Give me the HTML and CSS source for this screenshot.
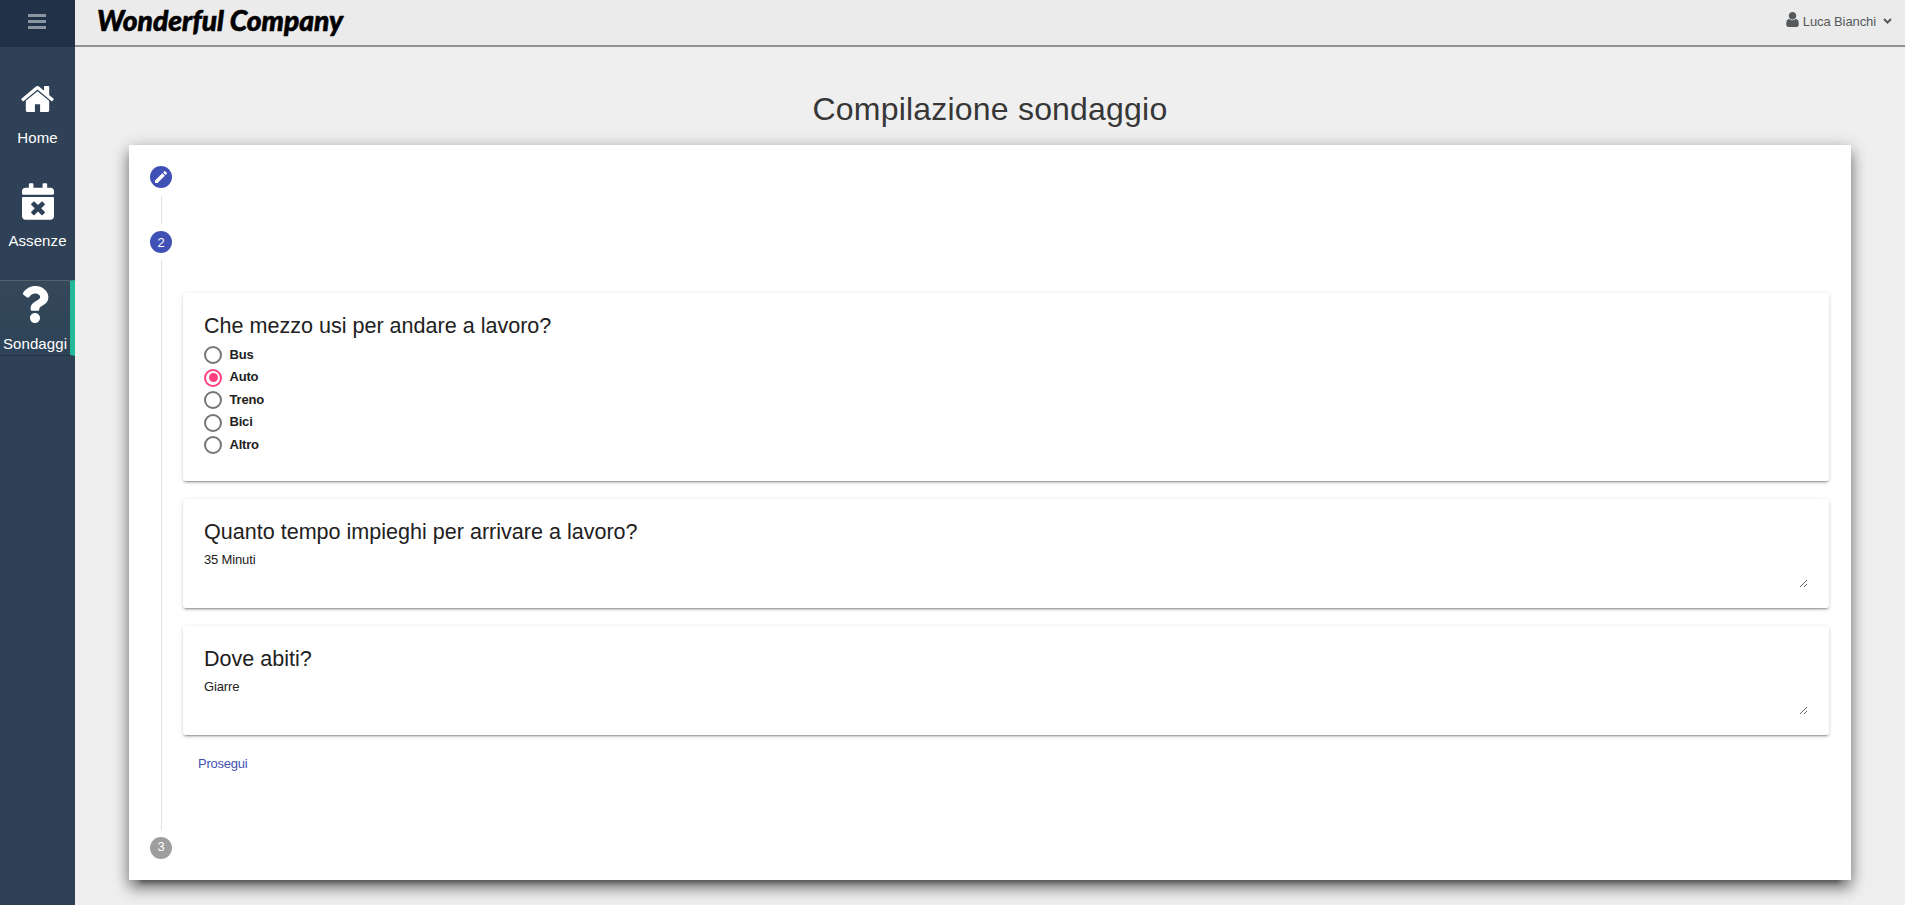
FILE: index.html
```html
<!DOCTYPE html>
<html lang="it">
<head>
<meta charset="utf-8">
<title>Compilazione sondaggio</title>
<link rel="stylesheet" href="styles.css">
</head>
<body>
<div class="app">
  <aside class="sidebar">
    <div class="menu-toggle"><svg width="18" height="15" viewBox="0 0 18 15"><path d="M0 0h18v3H0zM0 6h18v3H0zM0 12h18v3H0z"/></svg></div>
    <nav class="nav">
      <a class="nav-item">
        <span class="nav-icon"><svg class="icon-home" viewBox="88 253 1616 1283"><path d="M1472 992v480q0 26-19 45t-45 19h-384v-384h-256v384h-384q-26 0-45-19t-19-45v-480q0-1 .5-3t.5-3l575-474 575 474q1 2 1 6zm223-69l-62 74q-8 9-21 11h-3q-13 0-21-7l-692-577-692 577q-12 8-24 7-13-2-21-11l-62-74q-8-10-7-23.5t11-21.5l719-599q32-26 76-26t76 26l244 204v-195q0-14 9-23t23-9h192q14 0 23 9t9 23v408l219 182q10 8 11 21.5t-7 23.5z"/></svg></span>
        <span class="nav-label">Home</span>
      </a>
      <a class="nav-item">
        <span class="nav-icon"><svg class="icon-calendar" viewBox="0 0 448 512"><path d="M436 160H12c-6.6 0-12-5.4-12-12v-36c0-26.500 21.500-48 48-48h48V12c0-6.600 5.400-12 12-12h40c6.600 0 12 5.400 12 12v52h128V12c0-6.600 5.400-12 12-12h40c6.600 0 12 5.400 12 12v52h48c26.500 0 48 21.500 48 48v36c0 6.600-5.400 12-12 12zM12 192h424c6.600 0 12 5.400 12 12v260c0 26.500-21.500 48-48 48H48c-26.500 0-48-21.500-48-48V204c0-6.600 5.400-12 12-12zm257.300 160l48.100-48.100c4.700-4.700 4.700-12.300 0-17l-28.300-28.300c-4.700-4.700-12.300-4.700-17 0L224 306.700l-48.100-48.100c-4.700-4.700-12.300-4.700-17 0l-28.300 28.300c-4.700 4.700-4.700 12.300 0 17l48.100 48.100-48.100 48.100c-4.700 4.700-4.700 12.300 0 17l28.300 28.300c4.700 4.700 12.300 4.700 17 0l48.100-48.100 48.100 48.100c4.700 4.700 12.300 4.700 17 0l28.300-28.300c4.700-4.700 4.700-12.300 0-17L269.300 352z"/></svg></span>
        <span class="nav-label">Assenze</span>
      </a>
      <a class="nav-item active">
        <span class="nav-icon"><svg class="icon-question" viewBox="0 0 384 512"><path d="M202.021 0C122.202 0 70.503 32.703 29.914 91.026c-7.363 10.580-5.093 25.086 5.178 32.874l43.138 32.709c10.373 7.865 25.132 6.026 33.253-4.148 25.049-31.381 43.630-49.449 82.757-49.449 30.764 0 68.816 19.799 68.816 49.631 0 22.552-18.617 34.134-48.993 51.164-35.423 19.860-82.299 44.576-82.299 106.405V320c0 13.255 10.745 24 24 24h72.471c13.255 0 24-10.745 24-24v-5.773c0-42.860 125.268-44.645 125.268-160.627C377.504 66.256 286.902 0 202.021 0zM192 373.459c-38.196 0-69.271 31.075-69.271 69.271 0 38.195 31.075 69.270 69.271 69.270s69.271-31.075 69.271-69.271-31.075-69.270-69.271-69.270z"/></svg></span>
        <span class="nav-label">Sondaggi</span>
      </a>
    </nav>
  </aside>
  <div class="page">
    <header class="topbar">
      <svg class="logo" width="262" height="45"><text x="5" y="31" textLength="246" lengthAdjust="spacingAndGlyphs">Wonderful Company</text></svg>
      <div class="user">
        <svg class="icon-user" viewBox="256 128 1280 1536"><path d="M1536 1399q0 109-62.500 187t-150.500 78h-854q-88 0-150.500-78t-62.500-187q0-85 8.500-160.500t31.500-152 58.500-131 94-89 134.500-34.500q131 128 313 128t313-128q76 0 134.500 34.500t94 89 58.500 131 31.500 152 8.500 160.500zm-256-887q0 159-112.500 271.500t-271.500 112.500-271.500-112.500-112.500-271.500 112.500-271.500 271.500-112.500 271.500 112.500 112.500 271.500z"/></svg>
        <span class="user-name">Luca Bianchi</span>
        <svg class="icon-chevron" viewBox="0 0 9 6"><path d="M1 1l3.500 3.500L8 1"/></svg>
      </div>
    </header>
    <main class="content">
      <h1 class="title">Compilazione sondaggio</h1>
      <section class="stepper">
        <div class="step-head"><span class="badge"><svg width="16" height="16" viewBox="0 0 24 24"><path d="M3 17.250V21h3.750L17.810 9.940l-3.750-3.750L3 17.250zM20.710 7.040c.39-.39.39-1.020 0-1.410l-2.340-2.340c-.39-.39-1.020-.39-1.410 0l-1.830 1.830 3.750 3.750 1.830-1.830z"/></svg></span></div>
        <div class="gap-line first"></div>
        <div class="step-head"><span class="badge">2</span></div>
        <div class="step-body">
          <article class="card choice">
            <h2>Che mezzo usi per andare a lavoro?</h2>
            <div class="options">
              <label class="option"><span class="radio"></span><span class="option-text">Bus</span></label>
              <label class="option"><span class="radio checked"></span><span class="option-text">Auto</span></label>
              <label class="option"><span class="radio"></span><span class="option-text">Treno</span></label>
              <label class="option"><span class="radio"></span><span class="option-text">Bici</span></label>
              <label class="option"><span class="radio"></span><span class="option-text">Altro</span></label>
            </div>
          </article>
          <article class="card open">
            <h2>Quanto tempo impieghi per arrivare a lavoro?</h2>
            <textarea>35 Minuti</textarea>
          </article>
          <article class="card open">
            <h2>Dove abiti?</h2>
            <textarea>Giarre</textarea>
          </article>
          <button class="next">Prosegui</button>
        </div>
        <div class="step-head"><span class="badge pending">3</span></div>
      </section>
    </main>
  </div>
</div>
</body>
</html>
```
FILE: styles.css
```css
* { box-sizing: border-box; }
html, body { height: 100%; }
body {
  margin: 0;
  overflow: hidden;
  background: #efefef;
  font-family: "Liberation Sans", Arial, sans-serif;
  font-size: 13px;
  color: #333;
}
svg { display: block; }
.app { display: flex; height: 100vh; }

.sidebar { width: 75px; flex: none; background: #2f4156; color: #fff; }
.menu-toggle { height: 47px; padding: 14px 0 0 28px; background: #203148; }
.menu-toggle svg { fill: #8b95a1; }
.nav { display: flex; flex-direction: column; gap: 27px; padding-top: 27px; }
.nav-item {
  display: flex;
  flex-direction: column;
  align-items: center;
  height: 76px;
  font-size: 15px;
  letter-spacing: .1px;
}
.nav-item svg { fill: #fff; }
.nav-icon { height: 54px; padding-top: 6px; }
.nav-label { line-height: 20px; }
.icon-home { width: 33px; height: 26px; margin-top: 6px; }
.icon-calendar { width: 32px; height: 37px; }
.icon-question { width: 28px; height: 37px; }
.nav-item.active {
  border-top: 1px solid #52636f;
  border-bottom: 1px solid #25333f;
  border-right: 5px solid #22b999;
  background: linear-gradient(#36485a, #2d4357);
}
.active .nav-icon { padding-top: 5px; height: 53px; }

.page { flex: 1; min-width: 0; }
.topbar {
  display: flex;
  justify-content: space-between;
  height: 47px;
  padding: 0 13px 0 17px;
  background: #ebebeb;
  border-bottom: 2px solid #929292;
}
.logo text {
  font: italic 900 28px Lato, "Liberation Sans", sans-serif;
  fill: #000;
  stroke: #000;
  stroke-width: .6px;
}
.user { display: flex; height: 43px; color: #55595c; }
.icon-user { width: 13px; height: 15px; margin: 12px 4px 0 0; fill: #55595c; }
.user-name { line-height: 43px; letter-spacing: -.1px; }
.icon-chevron { width: 9px; height: 6px; margin: 18px 0 0 7px; fill: none; stroke: #55595c; stroke-width: 2; }

.content { padding: 0 54px; }
.title {
  margin: 0;
  padding-top: 43px;
  height: 98px;
  font-size: 32px;
  line-height: 38px;
  font-weight: 400;
  letter-spacing: .2px;
  text-align: center;
  color: #373737;
}
.stepper {
  height: 735px;
  background: #fff;
  box-shadow: 0 14px 4px -11px rgba(0, 0, 0, .3), 0 8px 14px rgba(0, 0, 0, .5), 0 0 16px rgba(0, 0, 0, .12);
}
.step-head { height: 65px; display: flex; align-items: center; padding-left: 21px; }
.badge {
  display: flex;
  align-items: center;
  justify-content: center;
  width: 22px;
  height: 22px;
  margin-top: -1px;
  border-radius: 50%;
  background: #3f51b5;
  color: #fff;
  font-size: 13px;
}
.badge svg { fill: #fff; }
.badge.pending { margin-top: 0; padding-bottom: 2px; background: #9e9e9e; }
.gap-line { width: 1px; height: 28px; margin: -14px 0 -14px 32px; background: #e0e0e0; }
.step-body {
  position: relative;
  height: 540px;
  padding: 18px 22px 0 54px;
}
.step-body::before {
  content: "";
  position: absolute;
  left: 32px;
  top: -15px;
  bottom: -15px;
  width: 1px;
  background: #e0e0e0;
}
.card {
  margin-bottom: 18px;
  padding: 21px;
  border-radius: 3px;
  color: #212121;
  box-shadow: 0 3px 1px -2px rgba(0, 0, 0, .2), 0 2px 2px 0 rgba(0, 0, 0, .14), 0 1px 5px 0 rgba(0, 0, 0, .12);
}
.card h2 { margin: 0; font-size: 21.55px; line-height: 24px; font-weight: 400; }
.choice { height: 188px; }
.open { height: 109px; }
.options { padding-top: 6px; }
.option { display: flex; align-items: center; gap: 7.5px; height: 22.5px; font-weight: 700; letter-spacing: -.2px; }
.option-text { padding-bottom: 2px; }
.radio { display: grid; place-items: center; width: 18px; height: 18px; border: 2px solid #757575; border-radius: 50%; }
.radio.checked { border-color: #ff4081; }
.radio.checked::after { content: ""; width: 9px; height: 9px; border-radius: 50%; background: #ff4081; }
textarea {
  display: block;
  width: 100%;
  height: 42px;
  margin-top: 2px;
  padding: 6px 0 0;
  border: 0;
  outline: 0;
  overflow: auto;
  resize: vertical;
  background: transparent;
  color: #212121;
  font: 13px/15px "Liberation Sans", Arial, sans-serif;
  letter-spacing: -.15px;
}
.next {
  display: block;
  height: 32px;
  margin-top: -6px;
  padding: 0 15px;
  border: 0;
  background: none;
  color: #3f51b5;
  font: 13px "Liberation Sans", Arial, sans-serif;
  letter-spacing: -.25px;
}
```
